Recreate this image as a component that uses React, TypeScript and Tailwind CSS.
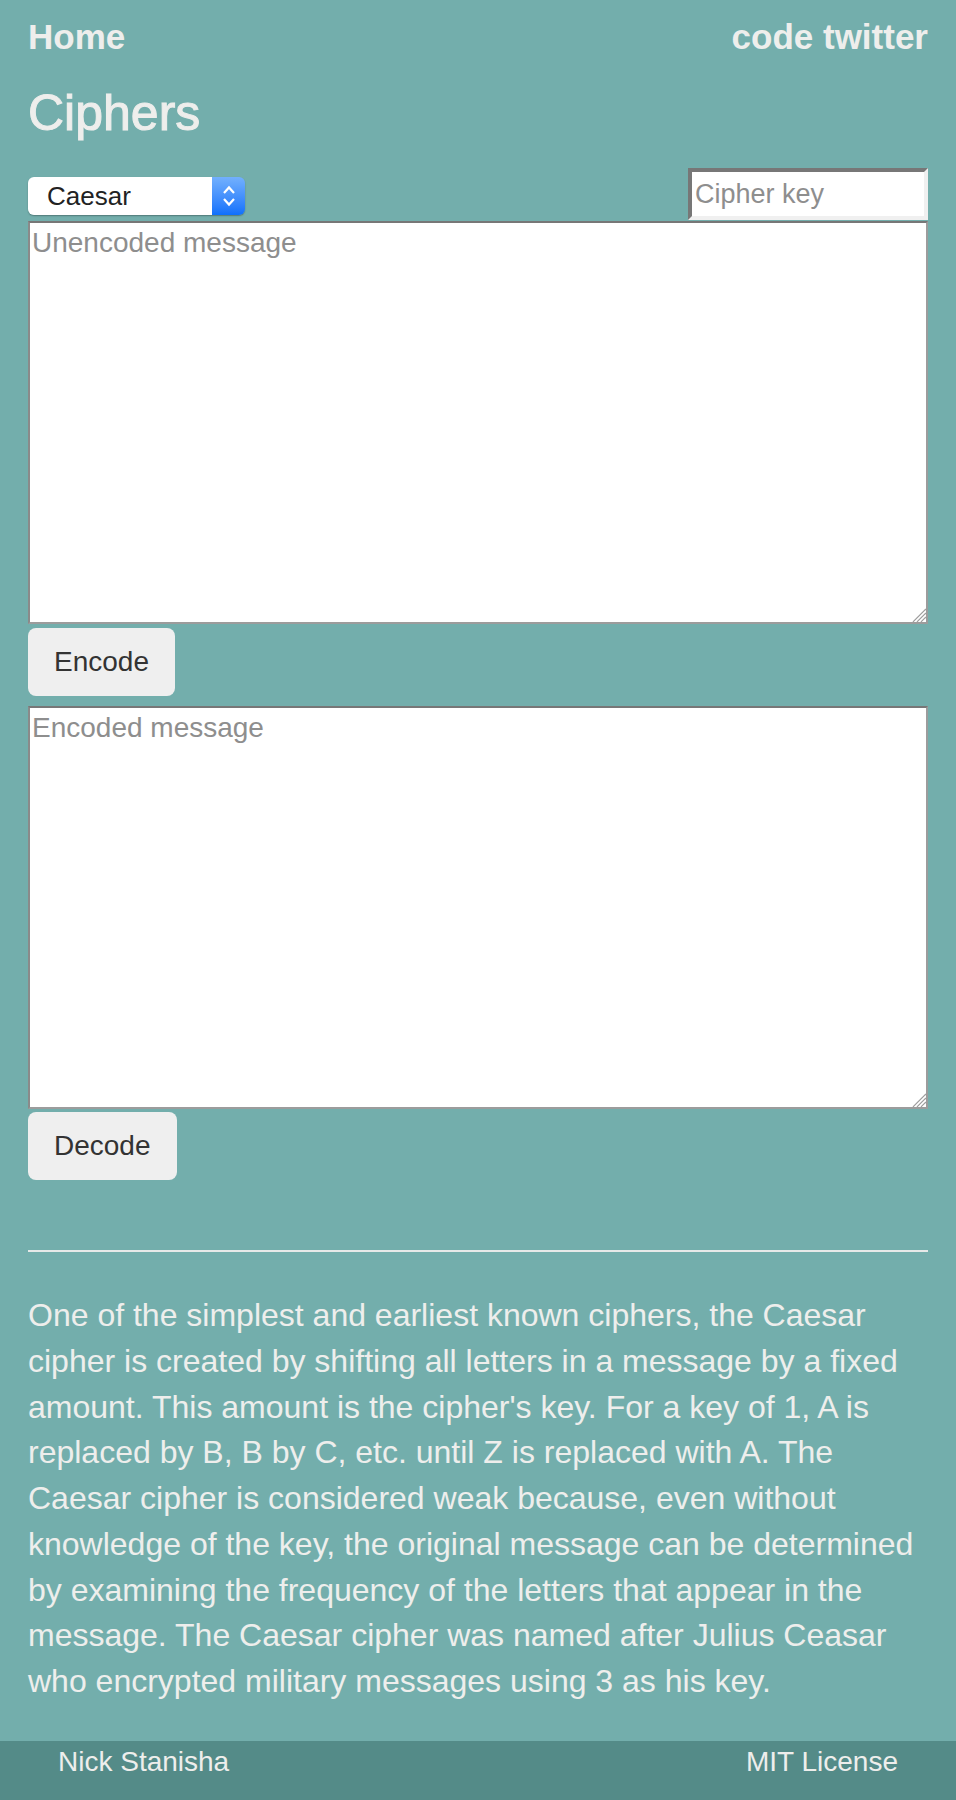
import { useState } from 'react';

const blurb =
  "One of the simplest and earliest known ciphers, the Caesar cipher is created by shifting all letters in a message by a fixed amount. This amount is the cipher's key. For a key of 1, A is replaced by B, B by C, etc. until Z is replaced with A. The Caesar cipher is considered weak because, even without knowledge of the key, the original message can be determined by examining the frequency of the letters that appear in the message. The Caesar cipher was named after Julius Ceasar who encrypted military messages using 3 as his key.";

function Grip() {
  return (
    <svg
      className="pointer-events-none absolute bottom-[2px] right-[2px]"
      width="16"
      height="16"
      viewBox="0 0 16 16"
    >
      <path d="M16 3 L3 16 M16 7 L7 16 M16 11 L11 16" stroke="#a0a0a0" strokeWidth="1.4" />
      <path d="M16 4.5 L4.5 16 M16 8.5 L8.5 16 M16 12.5 L12.5 16" stroke="#ffffff" strokeWidth="1" />
    </svg>
  );
}

function MessageBox({ placeholder, value, onChange }: { placeholder: string; value: string; onChange: (v: string) => void }) {
  return (
    <div className="relative h-[403px] w-full">
      <textarea
        value={value}
        onChange={(e) => onChange(e.target.value)}
        placeholder={placeholder}
        className="block h-full w-full resize-none border-2 border-t-[#777777] border-l-[#8a8a8a] border-b-[#9c9c9c] border-r-[#9c9c9c] bg-white px-[2px] py-[4px] text-[28px]/[32px] text-[#222] outline-none placeholder:text-[#8e8e8e]"
      />
      <Grip />
    </div>
  );
}

function ActionButton({ label }: { label: string }) {
  return (
    <button className="h-[68px] rounded-[8px] bg-[#efefef] px-[26px] text-[28px] text-[#333333]">
      {label}
    </button>
  );
}

export default function App() {
  const [plain, setPlain] = useState('');
  const [coded, setCoded] = useState('');

  return (
    <div className="min-h-screen bg-[#73aeac] font-['Liberation_Sans',Arial,sans-serif] text-[#eeeeec]">
      <main className="px-[28px] pt-[17px]">
        <nav className="flex justify-between text-[35px]/[40px] font-bold">
          <a href="#">Home</a>
          <a href="#">code twitter</a>
        </nav>

        <h1 className="mt-[28px] text-[50px]/[57px] [-webkit-text-stroke:1px_#eeeeec]">Ciphers</h1>

        <div className="mt-[26px] flex items-end justify-between">
          <div className="mb-[5px] flex h-[38px] w-[217px] rounded-[6px] shadow-[0_1px_1.5px_rgba(0,0,0,0.3)]">
            <select className="h-full flex-1 appearance-none rounded-l-[6px] bg-white pl-[19px] text-[26px] text-[#222] outline-none">
              <option>Caesar</option>
              <option>Vigenère</option>
              <option>Atbash</option>
            </select>
            <div className="flex w-[33px] items-center justify-center rounded-r-[6px] bg-gradient-to-b from-[#72b0fd] to-[#0d70fb]">
              <svg width="14" height="24" viewBox="0 0 14 24" fill="none" stroke="white" strokeWidth="2.2">
                <path d="M2 9 L7 3.5 L12 9" />
                <path d="M2 15 L7 20.5 L12 15" />
              </svg>
            </div>
          </div>
          <input
            placeholder="Cipher key"
            className="h-[52px] w-[240px] border-4 border-t-[#777777] border-l-[#777777] border-b-[#f0f0f0] border-r-[#f0f0f0] bg-white px-[3px] text-[27px] text-[#222] outline-none placeholder:text-[#8e8e8e]"
          />
        </div>

        <div className="mt-[1px]">
          <MessageBox placeholder="Unencoded message" value={plain} onChange={setPlain} />
        </div>
        <div className="mt-[4px]">
          <ActionButton label="Encode" />
        </div>

        <div className="mt-[10px]">
          <MessageBox placeholder="Encoded message" value={coded} onChange={setCoded} />
        </div>
        <div className="mt-[3px]">
          <ActionButton label="Decode" />
        </div>

        <hr className="mt-[70px] border-t-2 border-[#e6e9e8]" />

        <p className="mt-[41px] text-[32px]/[45.75px]">{blurb}</p>
      </main>

      <footer className="mt-[36px] flex justify-between bg-[#548b88] px-[58px] pb-[30px] pt-[5px] text-[28px]/[32px]">
        <span>Nick Stanisha</span>
        <span>MIT License</span>
      </footer>
    </div>
  );
}
